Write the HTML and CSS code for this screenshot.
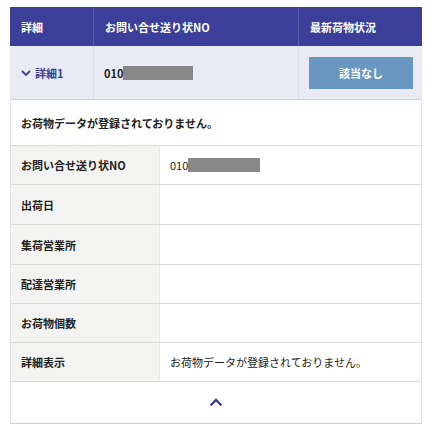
FILE: index.html
```html
<!DOCTYPE html>
<html lang="ja">
<head>
<meta charset="utf-8">
<link rel="stylesheet" href="styles.css">
</head>
<body>
<div class="wrap">
  <div class="head">
    <div class="hc">詳細</div>
    <div class="hc">お問い合せ送り状NO</div>
    <div class="hc">最新荷物状況</div>
  </div>
  <div class="summary">
    <div class="sc toggle">
      <svg class="chev" width="10" height="6" viewBox="0 0 10 6"><path d="M1 1 L5 5 L9 1" fill="none" stroke="#3b3f99" stroke-width="1.8"/></svg>
      <span>詳細1</span>
    </div>
    <div class="sc num"><span>010</span><span class="mask m1"></span></div>
    <div class="sc"><div class="btn">該当なし</div></div>
  </div>
  <div class="msg">お荷物データが登録されておりません。</div>
  <div class="rows">
    <div class="row"><div class="lab">お問い合せ送り状NO</div><div class="val"><span>010</span><span class="mask m2"></span></div></div>
    <div class="row"><div class="lab">出荷日</div><div class="val"></div></div>
    <div class="row"><div class="lab">集荷営業所</div><div class="val"></div></div>
    <div class="row"><div class="lab">配達営業所</div><div class="val"></div></div>
    <div class="row"><div class="lab">お荷物個数</div><div class="val"></div></div>
    <div class="row"><div class="lab">詳細表示</div><div class="val">お荷物データが登録されておりません。</div></div>
  </div>
  <div class="foot">
    <svg width="14" height="9" viewBox="0 0 14 9"><path d="M1.5 7.5 L7 2 L12.5 7.5" fill="none" stroke="#3b3f99" stroke-width="2.4"/></svg>
  </div>
</div>
</body>
</html>
```

FILE: styles.css
```css
* { box-sizing: border-box; }
body {
  margin: 0;
  background: #fff;
  font-family: "Noto Sans CJK JP", "Noto Sans", sans-serif;
  font-size: 11px;
  color: #222;
}
.wrap {
  margin: 7px 0 0 10px;
  width: 412px;
}
.head {
  display: grid;
  grid-template-columns: 83px 205px 124px;
  height: 39px;
  background: #3b3f99;
  color: #fff;
  font-weight: 700;
}
.hc {
  display: flex;
  align-items: center;
  padding-left: 11px;
  border-left: 1px solid #5a5fae;
}
.hc:first-child { border-left: none; }
.summary {
  display: grid;
  grid-template-columns: 83px 205px 124px;
  height: 54px;
  background: #e9ebf4;
  border-bottom: 1px solid #cfcfd4;
  font-weight: 700;
}
.sc {
  display: flex;
  align-items: center;
  padding-left: 10px;
  border-left: 1px solid #d8dbe8;
}
.sc:first-child { border-left: none; }
.toggle { color: #3b3f99; gap: 4px; padding-left: 11px; }
.toggle span { color: #3b3f99; }
.num span { color: #222; }
.mask {
  display: inline-block;
  background: #888;
  height: 14px;
}
.m1 { width: 70px; }
.m2 { width: 72px; }
.btn {
  width: 104px;
  height: 32px;
  background: #6a97c0;
  color: #fff;
  display: flex;
  align-items: center;
  justify-content: center;
  font-weight: 700;
}
.msg {
  height: 46px;
  display: flex;
  align-items: center;
  padding-left: 10px;
  font-weight: 700;
  border-left: 1px solid #e2e2e2;
  border-right: 1px solid #e2e2e2;
  border-bottom: 1px solid #dadada;
}
.rows {
  border-left: 1px solid #e2e2e2;
  border-right: 1px solid #e2e2e2;
}
.row {
  display: grid;
  grid-template-columns: 149px 1fr;
  height: 39px;
  border-bottom: 1px solid #dadada;
}
.row:nth-child(2), .row:nth-child(3) { height: 40px; }
.lab {
  background: #f3f3f1;
  display: flex;
  align-items: center;
  padding-left: 10px;
  font-weight: 700;
  border-right: 1px solid #e6e6e6;
}
.val {
  display: flex;
  align-items: center;
  padding-left: 10px;
}
.foot {
  height: 42px;
  display: flex;
  align-items: center;
  justify-content: center;
  border-left: 1px solid #e2e2e2;
  border-right: 1px solid #e2e2e2;
  border-bottom: 1px solid #d0d0d0;
}
```
